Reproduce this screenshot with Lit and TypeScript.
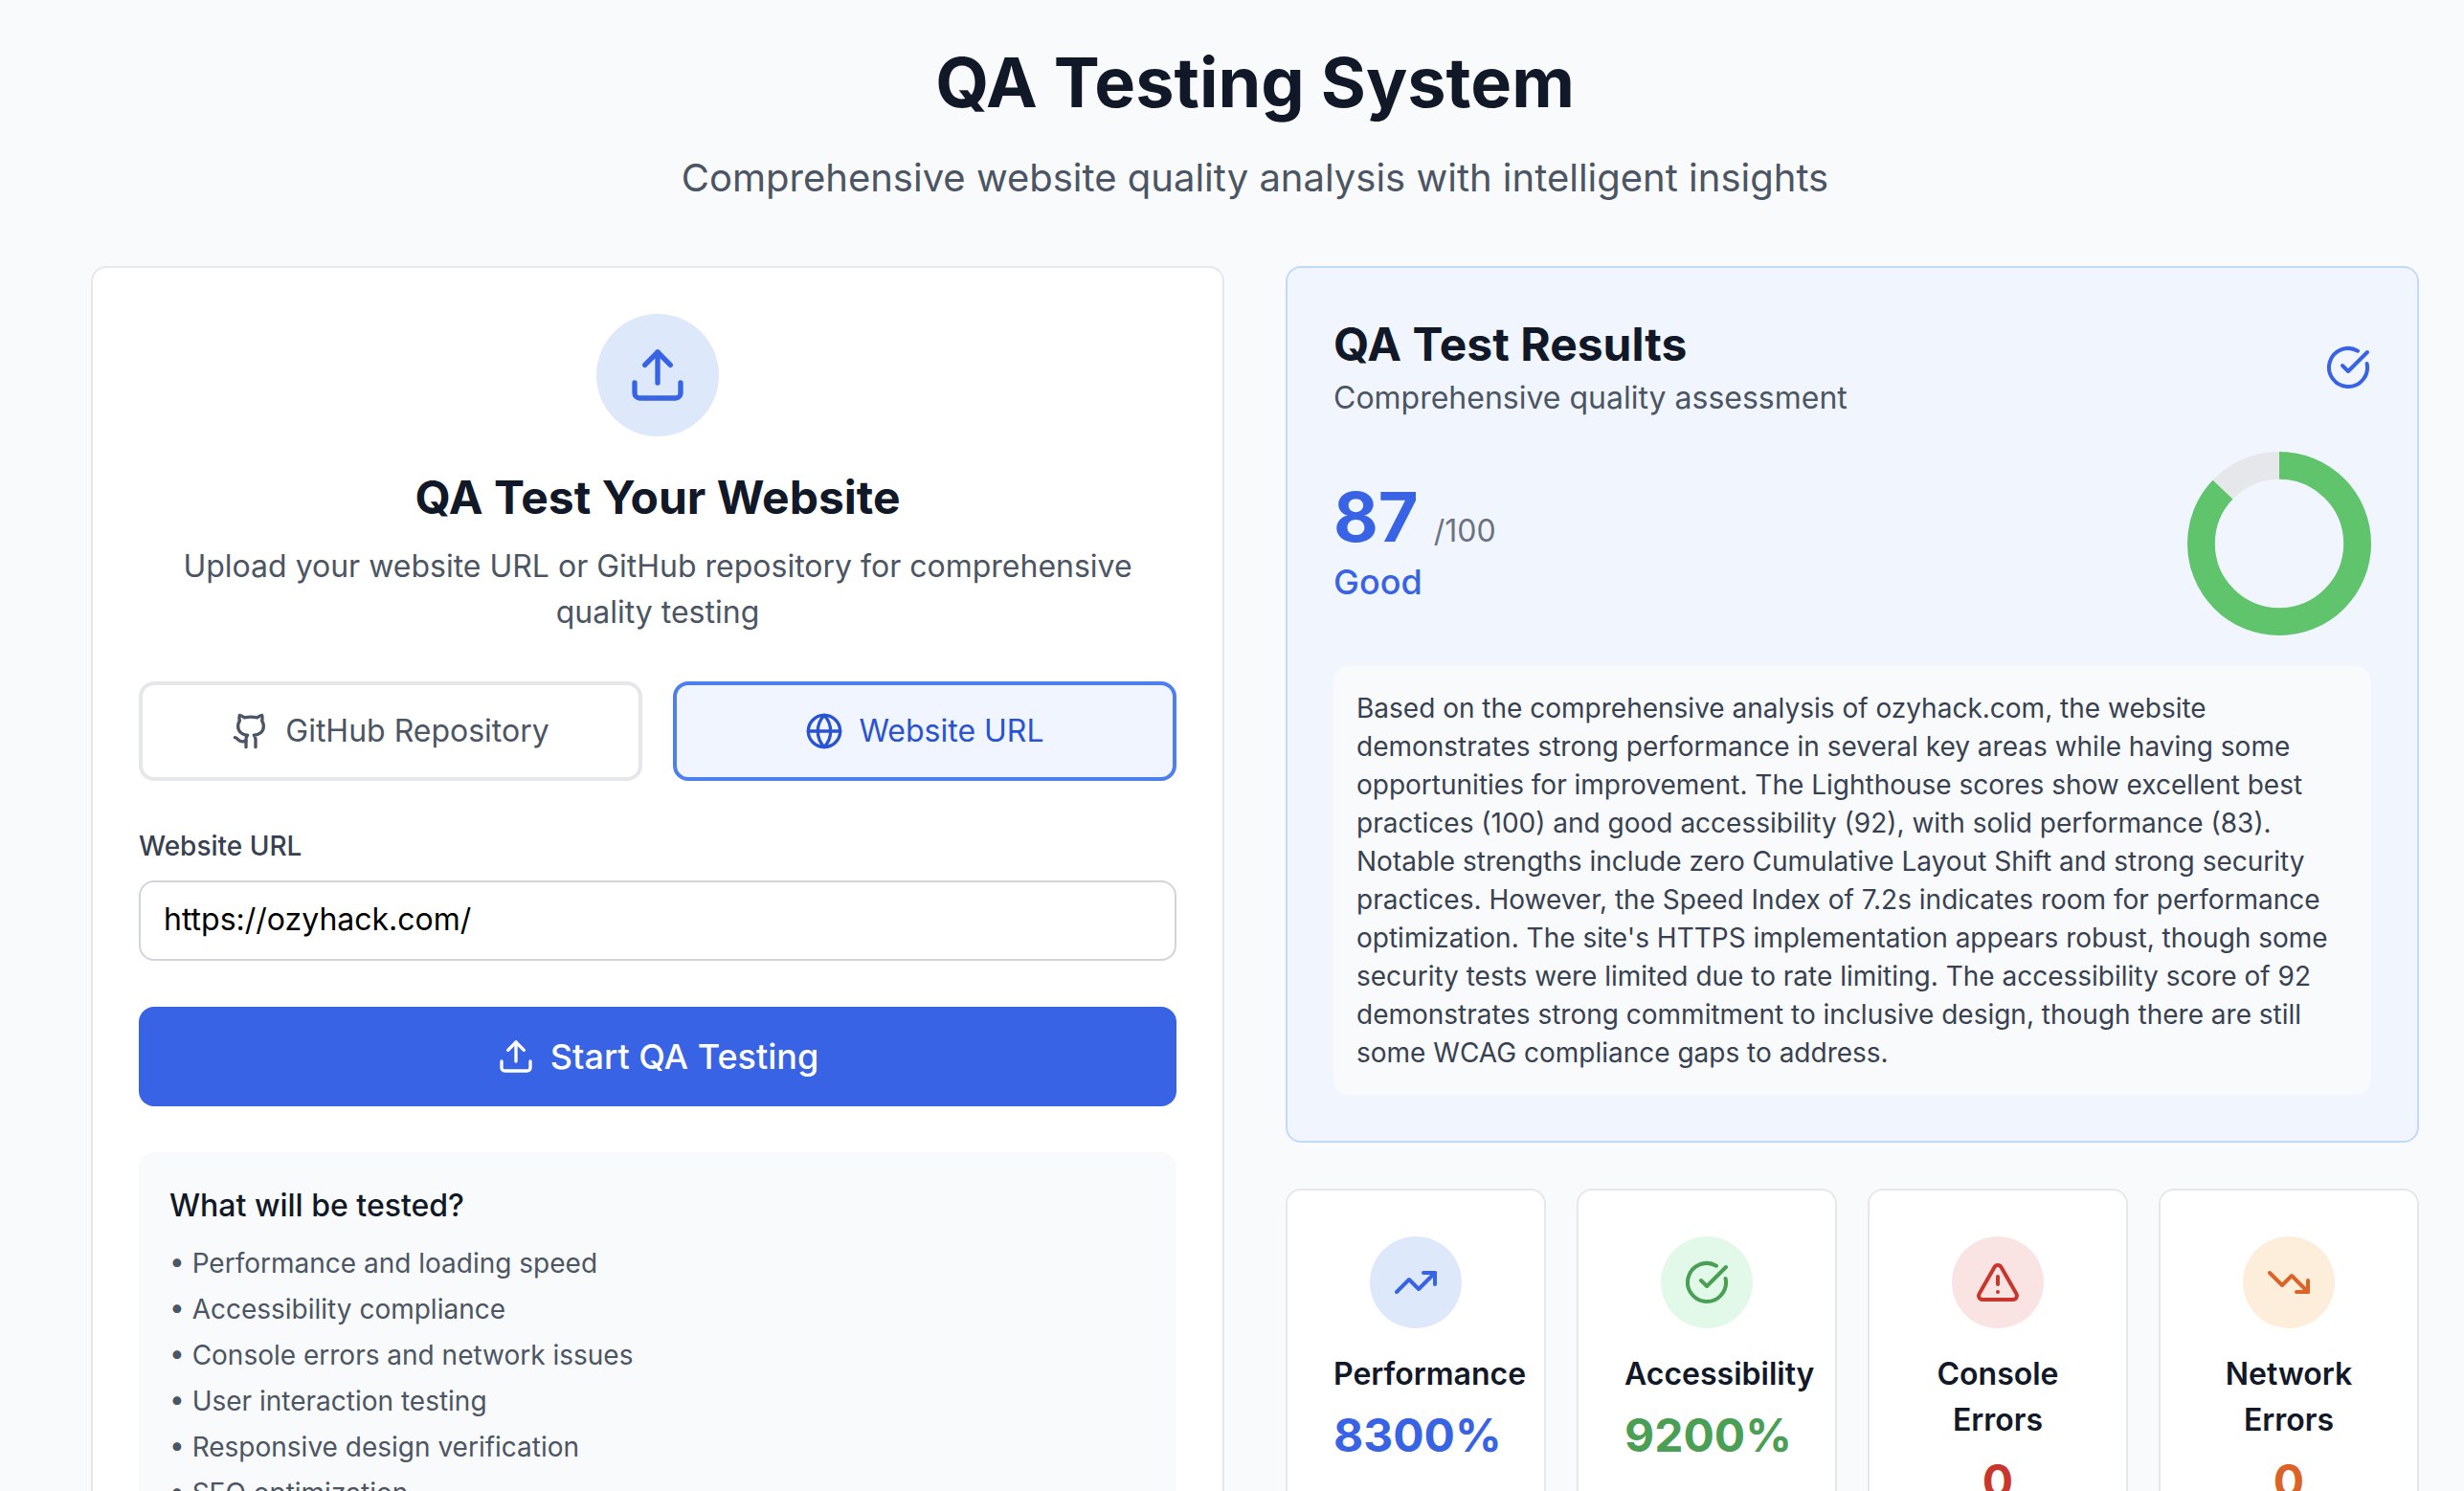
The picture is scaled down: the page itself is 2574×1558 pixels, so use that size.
import { LitElement, html, svg, css } from "lit";
import { customElement } from "lit/decorators.js";

const icon = (size: number, body: unknown) => html`
    <svg width=${size} height=${size} viewBox="0 0 24 24" fill="none" stroke="currentColor"
        stroke-width="2" stroke-linecap="round" stroke-linejoin="round">${body}</svg>
`;

const upload = svg`
    <path d="M21 15v4a2 2 0 0 1-2 2H5a2 2 0 0 1-2-2v-4" />
    <polyline points="17 8 12 3 7 8" />
    <line x1="12" x2="12" y1="3" y2="15" />`;
const github = svg`
    <path d="M15 22v-4a4.8 4.8 0 0 0-1-3.5c3 0 6-2 6-5.5.08-1.25-.27-2.48-1-3.5.28-1.15.28-2.35 0-3.5 0 0-1 0-3 1.5-2.64-.5-5.36-.5-8 0C6 2 5 2 5 2c-.3 1.15-.3 2.35 0 3.5A5.403 5.403 0 0 0 4 9c0 3.5 3 5.5 6 5.5-.39.49-.68 1.05-.85 1.65-.17.6-.22 1.23-.15 1.85v4" />
    <path d="M9 18c-4.51 2-5-2-7-2" />`;
const globe = svg`
    <circle cx="12" cy="12" r="10" />
    <path d="M12 2a14.5 14.5 0 0 0 0 20 14.5 14.5 0 0 0 0-20" />
    <path d="M2 12h20" />`;
const circleCheck = svg`
    <path d="M21.801 10A10 10 0 1 1 17 3.335" />
    <path d="m9 11 3 3L22 4" />`;
const trendingUp = svg`
    <polyline points="22 7 13.5 15.5 8.5 10.5 2 17" />
    <polyline points="16 7 22 7 22 13" />`;
const trendingDown = svg`
    <polyline points="22 17 13.5 8.5 8.5 13.5 2 7" />
    <polyline points="16 17 22 17 22 11" />`;
const alert = svg`
    <path d="m21.73 18-8-14a2 2 0 0 0-3.46 0l-8 14A2 2 0 0 0 4 21h16a2 2 0 0 0 1.73-3" />
    <path d="M12 9v4" />
    <path d="M12 17h.01" />`;

const checks = [
    "Performance and loading speed",
    "Accessibility compliance",
    "Console errors and network issues",
    "User interaction testing",
    "Responsive design verification",
    "SEO optimization",
];

const stats = [
    { name: "Performance", value: "8300%", tone: "blue", glyph: trendingUp },
    { name: "Accessibility", value: "9200%", tone: "green", glyph: circleCheck },
    { name: "Console Errors", value: "0", tone: "red", glyph: alert },
    { name: "Network Errors", value: "0", tone: "orange", glyph: trendingDown },
];

const summary = `Based on the comprehensive analysis of ozyhack.com, the website demonstrates strong performance in several key areas while having some opportunities for improvement. The Lighthouse scores show excellent best practices (100) and good accessibility (92), with solid performance (83). Notable strengths include zero Cumulative Layout Shift and strong security practices. However, the Speed Index of 7.2s indicates room for performance optimization. The site's HTTPS implementation appears robust, though some security tests were limited due to rate limiting. The accessibility score of 92 demonstrates strong commitment to inclusive design, though there are still some WCAG compliance gaps to address.`;

@customElement("app-root")
export class AppRoot extends LitElement {
    static styles = css`
        :host {
            display: block;
            height: 1558px;
            overflow: hidden;
            background: #f9fafc;
            font-family: Inter, "Liberation Sans", sans-serif;
            color: #111827;
        }

        * {
            box-sizing: border-box;
        }

        .page {
            padding: 46px 47px 48px 95px;
        }

        .title {
            margin: 0 0 32px;
            text-align: center;
            font-size: 72px;
            line-height: 80px;
            font-weight: 700;
        }

        .tagline {
            margin: 0 0 64px;
            text-align: center;
            font-size: 40px;
            line-height: 56px;
            color: #4b5563;
        }

        .columns {
            display: grid;
            grid-template-columns: 1fr 1fr;
            gap: 64px;
            align-items: start;
        }

        .card {
            background: #fff;
            border: 2px solid #e5e7eb;
            border-radius: 16px;
            padding: 48px;
        }

        .hero {
            display: flex;
            flex-direction: column;
            align-items: center;
            text-align: center;
        }

        .hero-icon {
            width: 128px;
            height: 128px;
            border-radius: 50%;
            background: #dee8fb;
            color: #3863e4;
            display: flex;
            align-items: center;
            justify-content: center;
            margin-bottom: 32px;
        }

        .hero h2 {
            margin: 0 0 16px;
            font-size: 48px;
            line-height: 64px;
            font-weight: 700;
        }

        .hero p {
            margin: 0 0 48px;
            font-size: 32px;
            line-height: 48px;
            color: #4b5563;
        }

        .tabs {
            display: grid;
            grid-template-columns: 1fr 1fr;
            gap: 32px;
            margin-bottom: 48px;
        }

        .tab {
            display: flex;
            align-items: center;
            justify-content: center;
            gap: 16px;
            padding: 24px;
            border: 4px solid #e5e7eb;
            border-radius: 16px;
            font-size: 32px;
            line-height: 48px;
            color: #4b5563;
        }

        .tab.active {
            border-color: #4d7fee;
            background: #f0f5ff;
            color: #2a53d2;
        }

        .label {
            display: block;
            margin-bottom: 16px;
            font-size: 28px;
            line-height: 40px;
            font-weight: 500;
            color: #374151;
        }

        .url {
            display: block;
            width: 100%;
            height: 84px;
            margin-bottom: 48px;
            padding: 14px 24px 18px;
            border: 2px solid #d1d5db;
            border-radius: 16px;
            background: #fff;
            font: inherit;
            font-size: 32px;
            line-height: 48px;
            color: #000;
        }

        .start {
            display: flex;
            align-items: center;
            justify-content: center;
            gap: 16px;
            height: 104px;
            margin-bottom: 48px;
            border-radius: 16px;
            background: #3863e4;
            color: #fff;
            font-size: 36px;
            line-height: 56px;
            font-weight: 500;
        }

        .tested {
            padding: 32px;
            border-radius: 16px;
            background: #f9fafb;
        }

        .tested h3 {
            margin: 0 0 16px;
            font-size: 32px;
            line-height: 48px;
            font-weight: 500;
        }

        .tested ul {
            margin: 0;
            padding: 0;
            list-style: none;
            display: flex;
            flex-direction: column;
            gap: 8px;
            font-size: 28px;
            line-height: 40px;
            color: #4b5563;
        }

        .right {
            display: flex;
            flex-direction: column;
            gap: 48px;
        }

        .results {
            background: #f1f6fe;
            border-color: #c3d9fc;
        }

        .results-head {
            display: flex;
            align-items: center;
            justify-content: space-between;
            margin-bottom: 32px;
        }

        .results-head h2 {
            margin: 0;
            font-size: 48px;
            line-height: 64px;
            font-weight: 700;
        }

        .results-head p {
            margin: 0;
            font-size: 32px;
            line-height: 48px;
            color: #4b5563;
        }

        .check {
            display: flex;
            color: #3863e4;
        }

        .score-row {
            display: flex;
            align-items: center;
            justify-content: space-between;
            margin-bottom: 32px;
        }

        .score {
            display: flex;
            align-items: baseline;
            gap: 16px;
            font-size: 72px;
            line-height: 80px;
            font-weight: 700;
            color: #3863e4;
        }

        .score span {
            font-size: 32px;
            line-height: 32px;
            font-weight: 400;
            color: #6b7280;
        }

        .grade {
            font-size: 36px;
            line-height: 56px;
            font-weight: 500;
            color: #3863e4;
        }

        .donut {
            display: block;
        }

        .summary {
            padding: 24px;
            border-radius: 16px;
            background: #f9fafb;
            font-size: 28px;
            line-height: 40px;
            color: #374151;
        }

        .stats {
            display: grid;
            grid-template-columns: repeat(4, 1fr);
            gap: 32px;
        }

        .stat {
            text-align: center;
            min-width: 0;
        }

        .stat-icon {
            width: 96px;
            height: 96px;
            margin: 0 auto 24px;
            border-radius: 50%;
            display: flex;
            align-items: center;
            justify-content: center;
        }

        .stat-name {
            font-size: 32px;
            line-height: 48px;
            font-weight: 600;
        }

        .stat-value {
            margin-top: 8px;
            font-size: 48px;
            line-height: 64px;
            font-weight: 700;
        }

        .blue .stat-icon { background: #dee8fb; }
        .blue .stat-icon, .blue .stat-value { color: #3863e4; }
        .green .stat-icon { background: #e2f8e9; }
        .green .stat-icon, .green .stat-value { color: #4a9f55; }
        .red .stat-icon { background: #f9e3e3; }
        .red .stat-icon, .red .stat-value { color: #c9362c; }
        .orange .stat-icon { background: #fdeddb; }
        .orange .stat-icon, .orange .stat-value { color: #dc6328; }
    `;

    render() {
        return html`
            <div class="page">
                <h1 class="title">QA Testing System</h1>
                <p class="tagline">Comprehensive website quality analysis with intelligent insights</p>
                <div class="columns">
                    ${this.renderForm()}
                    <div class="right">
                        ${this.renderResults()}
                        <div class="stats">
                            ${stats.map((s) => html`
                                <div class="card stat ${s.tone}">
                                    <div class="stat-icon">${icon(48, s.glyph)}</div>
                                    <div class="stat-name">${s.name}</div>
                                    <div class="stat-value">${s.value}</div>
                                </div>
                            `)}
                        </div>
                    </div>
                </div>
            </div>
        `;
    }

    renderForm() {
        return html`
            <div class="card">
                <div class="hero">
                    <div class="hero-icon">${icon(64, upload)}</div>
                    <h2>QA Test Your Website</h2>
                    <p>Upload your website URL or GitHub repository for comprehensive quality testing</p>
                </div>
                <div class="tabs">
                    <div class="tab">${icon(40, github)}GitHub Repository</div>
                    <div class="tab active">${icon(40, globe)}Website URL</div>
                </div>
                <label class="label" for="url">Website URL</label>
                <input class="url" id="url" value="https://ozyhack.com/" />
                <div class="start">${icon(40, upload)}Start QA Testing</div>
                <div class="tested">
                    <h3>What will be tested?</h3>
                    <ul>
                        ${checks.map((c) => html`<li>• ${c}</li>`)}
                    </ul>
                </div>
            </div>
        `;
    }

    renderResults() {
        const radius = 81.6;
        const length = 2 * Math.PI * radius;
        return html`
            <div class="card results">
                <div class="results-head">
                    <div>
                        <h2>QA Test Results</h2>
                        <p>Comprehensive quality assessment</p>
                    </div>
                    <div class="check">${icon(48, circleCheck)}</div>
                </div>
                <div class="score-row">
                    <div>
                        <div class="score">87<span>/100</span></div>
                        <div class="grade">Good</div>
                    </div>
                    <svg class="donut" width="192" height="192" viewBox="0 0 192 192">
                        <circle cx="96" cy="96" r=${radius} fill="none" stroke="#e6e7ea" stroke-width="28.8" />
                        <circle cx="96" cy="96" r=${radius} fill="none" stroke="#5fc46b" stroke-width="28.8"
                            stroke-dasharray="${length * 0.87} ${length}" transform="rotate(-90 96 96)" />
                    </svg>
                </div>
                <div class="summary">${summary}</div>
            </div>
        `;
    }
}
